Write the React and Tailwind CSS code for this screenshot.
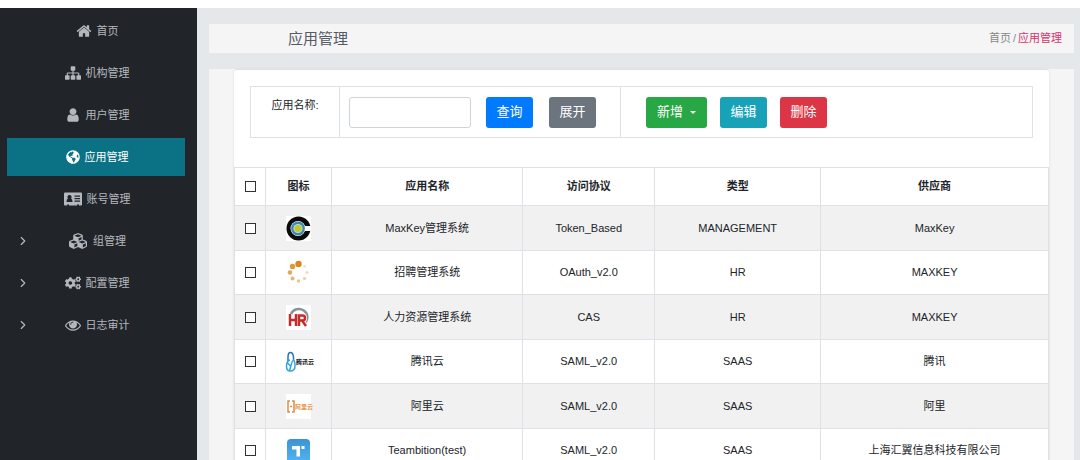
import { useState } from 'react';
import { FaCogs, FaCubes, FaGlobeAmericas } from 'react-icons/fa';
import { ChevronRight } from 'lucide-react';

function Glyph({ d, className }) {
  return (
    <svg viewBox="0 0 1792 1792" fill="currentColor" className={className} aria-hidden="true">
      <path d={d} />
    </svg>
  );
}

const HOME =
  'M1472 992v480q0 26-19 45t-45 19h-384v-384h-256v384h-384q-26 0-45-19t-19-45v-480q0-1 .5-3t.5-3l575-474 575 474q1 2 1 6zm223-69l-62 74q-8 9-21 11h-3q-13 0-21-7l-692-577-692 577q-12 8-24 7-13-2-21-11l-62-74q-8-10-7-23.5t11-21.5l719-599q32-26 76-26t76 26l244 204v-195q0-14 9-23t23-9h192q14 0 23 9t9 23v408l219 182q10 8 11 21.5t-7 23.5z';
const SITEMAP =
  'M1792 1248v320q0 40-28 68t-68 28h-320q-40 0-68-28t-28-68v-320q0-40 28-68t68-28h96v-192h-512v192h96q40 0 68 28t28 68v320q0 40-28 68t-68 28h-320q-40 0-68-28t-28-68v-320q0-40 28-68t68-28h96v-192h-512v192h96q40 0 68 28t28 68v320q0 40-28 68t-68 28h-320q-40 0-68-28t-28-68v-320q0-40 28-68t68-28h96v-192q0-52 38-90t90-38h512v-192h-96q-40 0-68-28t-28-68v-320q0-40 28-68t68-28h320q40 0 68 28t28 68v320q0 40-28 68t-68 28h-96v192h512q52 0 90 38t38 90v192h96q40 0 68 28t28 68z';
const USER =
  'M1536 1399q0 109-62.5 187t-150.5 78h-854q-88 0-150.5-78t-62.5-187q0-85 8.5-160.5t31.5-152 58.5-131 94-89 134.5-34.5q131 128 313 128t313-128q76 0 134.5 34.5t94 89 58.5 131 31.5 152 8.5 160.5zm-256-887q0 159-112.5 271.5t-271.5 112.5-271.5-112.5-112.5-271.5 112.5-271.5 271.5-112.5 271.5 112.5 112.5 271.5z';
const EYE =
  'M1664 960q-152-236-381-353 61 104 61 225 0 185-131.5 316.5t-316.5 131.5-316.5-131.5-131.5-316.5q0-121 61-225-229 117-381 353 133 205 333.5 326.5t434.5 121.5 434.5-121.5 333.5-326.5zm-720-384q0-20-14-34t-34-14q-125 0-214.5 89.5t-89.5 214.5q0 20 14 34t34 14 34-14 14-34q0-86 61-147t147-61q20 0 34-14t14-34zm848 384q0 34-20 69-140 230-376.5 368.5t-499.5 138.5-499.5-139-376.5-368q-20-35-20-69t20-69q140-229 376.5-368t499.5-139 499.5 139 376.5 368q20 35 20 69z';

function CardIcon() {
  return (
    <svg viewBox="0 0 18 14" className="h-[14px] w-[18px]" fill="currentColor" fillRule="evenodd" aria-hidden="true">
      <path d="M1 0.5H17a1 1 0 0 1 1 1V12.5a1 1 0 0 1-1 1H15V12.5H13V13.5H5V12.5H3V13.5H1a1 1 0 0 1-1-1V1.5a1 1 0 0 1 1-1ZM5.5 3A2 2.1 0 0 0 4 6.6Q2.5 7 2.5 10H8.5Q8.5 7 7 6.6A2 2.1 0 0 0 5.5 3ZM10.5 3.5V4.7H16V3.5ZM10.5 6V7.2H16V6ZM10.5 8.5V9.7H16V8.5Z" />
    </svg>
  );
}

function MaxKeyLogo() {
  return (
    <svg viewBox="0 0 25 25" className="size-[25px]" aria-hidden="true">
      <rect width="25" height="25" fill="#fff" />
      <circle cx="12.5" cy="12.5" r="12" fill="#0a0a0a" />
      <path d="M14 12.5L19 10H25V15H19Z" fill="#fff" />
      <circle cx="12" cy="12.5" r="7.5" fill="#fff" />
      <circle cx="12" cy="12.5" r="6.9" fill="#3d88ab" />
      <circle cx="12" cy="12.5" r="4.6" fill="#b9dce0" />
      <circle cx="12" cy="12.5" r="3.6" fill="#c3c62c" />
    </svg>
  );
}

function RecruitLogo() {
  return (
    <svg viewBox="0 0 25 25" className="size-[25px]" aria-hidden="true">
      <circle cx="12.5" cy="4" r="3.2" fill="#d68a1c" />
      <circle cx="6.5" cy="6.5" r="2.7" fill="#dc9a3a" />
      <circle cx="4" cy="12.5" r="2.3" fill="#e0a960" />
      <circle cx="6.5" cy="18.5" r="2" fill="#e2b67e" />
      <circle cx="12.5" cy="21" r="1.7" fill="#e6c297" />
      <circle cx="18.5" cy="18.5" r="1.6" fill="#eccfae" />
      <circle cx="21" cy="12.5" r="1.5" fill="#efd9c0" />
      <circle cx="18.5" cy="6.5" r="1.4" fill="#f2e2d0" />
    </svg>
  );
}

function HrLogo() {
  return (
    <svg viewBox="0 0 25 25" className="size-[25px]" aria-hidden="true">
      <rect width="25" height="25" fill="#fff" />
      <path d="M5 9A8.5 8 0 1 1 18.5 18" fill="none" stroke="#8b9494" strokeWidth="2.5" />
      <path d="M4 9V21M10 9V21M4 15H10M13 21V10.5H16.5Q19 10.5 19 13T16.5 15.5H13M16 15.5L20 21" fill="none" stroke="#fff" strokeWidth="4" />
      <path d="M4 9V21M10 9V21M4 15H10M13 21V10.5H16.5Q19 10.5 19 13T16.5 15.5H13M16 15.5L20 21" fill="none" stroke="#c62b2b" strokeWidth="2.5" />
    </svg>
  );
}

function TencentLogo() {
  return (
    <svg viewBox="0 0 25 25" className="size-[25px] overflow-visible" aria-hidden="true">
      <g fill="none" strokeWidth="1.5" strokeLinejoin="round">
        <path d="M2 12V8Q2 3.500 4.500 3.500T7.500 8V11" stroke="#2473b8" />
        <path d="M4 11Q0.500 12 0.500 17T4 22Q9 22 9 17T7.500 11Q6 12 5.500 15L3.500 21.500M1.500 14L4.500 17" stroke="#35a5dc" />
      </g>
      <text x="10" y="15" fontSize="6" fontWeight="700" fill="#111">腾讯云</text>
    </svg>
  );
}

function AliyunLogo() {
  return (
    <svg viewBox="0 0 25 25" className="size-[25px] overflow-visible" aria-hidden="true">
      <rect width="25" height="25" fill="#fff" />
      <path d="M4 7H2V18H4M6 7H8V18H6M4 12.500H6" fill="none" stroke="#e08a43" strokeWidth="1.500" />
      <text x="9" y="15" fontSize="6" fontWeight="700" fill="#e8954f">阿里云</text>
    </svg>
  );
}

function TeambitionLogo() {
  return (
    <svg viewBox="0 0 25 25" className="size-[25px]" aria-hidden="true">
      <defs>
        <linearGradient id="tb" x1="0" y1="0" x2="0" y2="1">
          <stop offset="0" stopColor="#3b93d6" />
          <stop offset="1" stopColor="#54b4f0" />
        </linearGradient>
      </defs>
      <rect x="1" y="1" width="23" height="24" rx="4" fill="url(#tb)" />
      <path d="M6 8H14V18.5H10.5V11.5H6ZM15.5 8H18.5V11H15.5Z" fill="#fff" />
    </svg>
  );
}

const menu = [
  { label: '首页', icon: <Glyph d={HOME} className="size-4" /> },
  { label: '机构管理', icon: <Glyph d={SITEMAP} className="size-4" /> },
  { label: '用户管理', icon: <Glyph d={USER} className="size-4" /> },
  { label: '应用管理', icon: <FaGlobeAmericas className="size-[14px]" />, active: true },
  { label: '账号管理', icon: <CardIcon /> },
  { label: '组管理', icon: <FaCubes className="h-[18px] w-[20px]" />, sub: true },
  { label: '配置管理', icon: <FaCogs className="size-4" />, sub: true },
  { label: '日志审计', icon: <Glyph d={EYE} className="size-4" />, sub: true },
];

const apps = [
  { name: 'MaxKey管理系统', protocol: 'Token_Based', type: 'MANAGEMENT', vendor: 'MaxKey', logo: <MaxKeyLogo /> },
  { name: '招聘管理系统', protocol: 'OAuth_v2.0', type: 'HR', vendor: 'MAXKEY', logo: <RecruitLogo /> },
  { name: '人力资源管理系统', protocol: 'CAS', type: 'HR', vendor: 'MAXKEY', logo: <HrLogo /> },
  { name: '腾讯云', protocol: 'SAML_v2.0', type: 'SAAS', vendor: '腾讯', logo: <TencentLogo /> },
  { name: '阿里云', protocol: 'SAML_v2.0', type: 'SAAS', vendor: '阿里', logo: <AliyunLogo /> },
  { name: 'Teambition(test)', protocol: 'SAML_v2.0', type: 'SAAS', vendor: '上海汇翼信息科技有限公司', logo: <TeambitionLogo /> },
];

const btn = 'flex h-[31px] items-center justify-center rounded-[3px] text-[13px] text-white';
const cell = 'border border-[#dee2e6] p-0';

function Check({ label, checked, onChange }) {
  return (
    <input
      type="checkbox"
      aria-label={label}
      checked={checked}
      onChange={onChange}
      className="mx-auto block size-[11px] appearance-none border border-[#333] bg-white checked:bg-[#007bff]"
    />
  );
}

export default function App() {
  const [name, setName] = useState('');
  const [selected, setSelected] = useState([]);

  function toggle(n) {
    setSelected(selected.includes(n) ? selected.filter((s) => s !== n) : [...selected, n]);
  }

  const all = selected.length === apps.length;

  return (
    <div className="flex h-screen flex-col bg-white pt-2 font-['Liberation_Sans','Noto_Sans_CJK_SC',sans-serif] text-[11px] text-[#212529]">
      <div className="flex min-h-0 flex-1 bg-[#e4e8ea]">
        <nav className="flex w-[197px] shrink-0 flex-col gap-1 bg-[#212529] pt-1 pr-3 pl-[7px]">
          {menu.map((m) => (
            <a
              key={m.label}
              href="#"
              className={
                m.active
                  ? 'flex h-[38px] items-center bg-[#0b7285] text-white'
                  : 'flex h-[38px] items-center text-[#b4b8be]'
              }
            >
              <span className="w-8 pl-[9px]">{m.sub && <ChevronRight size={14} strokeWidth={2} />}</span>
              <span className="flex flex-1 items-center justify-center gap-[5px] pr-[30px]">
                {m.icon}
                {m.label}
              </span>
            </a>
          ))}
        </nav>

        <main className="flex min-w-0 flex-1 flex-col gap-4 overflow-y-auto pt-4 pr-[6px] pl-3 [scrollbar-width:none]">
          <header className="flex h-[29px] shrink-0 items-center justify-between bg-[#f5f5f6] pr-3 pl-[79px]">
            <h1 className="text-[15px] leading-5 text-[#545b64]">应用管理</h1>
            <div className="flex gap-[2px] text-[#888]">
              <a href="#">首页</a>
              <span>/</span>
              <a href="#" className="text-[#d6336c]">应用管理</a>
            </div>
          </header>

          <section className="flex-1 bg-[#f5f5f6] px-[25px]">
            <div className="rounded-t-[3px] border-t border-[#dee2e6] bg-white pt-4 shadow-sm">
              <form className="mx-4 flex h-[52px] border border-[#dee2e6]" onSubmit={(e) => e.preventDefault()}>
                <label htmlFor="app-name" className="w-[89px] border-r border-[#dee2e6] pt-[10px] text-center leading-4">
                  应用名称:
                </label>
                <div className="flex w-[281px] items-center border-r border-[#dee2e6] pl-[9px]">
                  <input
                    id="app-name"
                    value={name}
                    onChange={(e) => setName(e.target.value)}
                    className="h-[31px] w-[122px] rounded-[3px] border border-[#ced4da] px-2 outline-none"
                  />
                  <button className={btn + ' ml-[15px] w-[47px] bg-[#007bff]'}>查询</button>
                  <button type="button" className={btn + ' ml-4 w-[47px] bg-[#6c757d]'}>展开</button>
                </div>
                <div className="flex items-center gap-[13px] pl-[25px]">
                  <button type="button" className={btn + ' w-[61px] gap-[7px] bg-[#28a745]'}>
                    新增
                    <svg viewBox="0 0 6 3" className="h-[3px] w-[6px]" fill="currentColor" aria-hidden="true">
                      <path d="M0 0H6L3 3Z" />
                    </svg>
                  </button>
                  <button type="button" className={btn + ' w-[47px] bg-[#17a2b8]'}>编辑</button>
                  <button type="button" className={btn + ' w-[47px] bg-[#dc3545]'}>删除</button>
                </div>
              </form>

              <table className="mt-[29px] w-full table-fixed border-collapse text-center">
                <colgroup>
                  <col className="w-[31px]" />
                  <col className="w-[66px]" />
                  <col className="w-[23.5%]" />
                  <col className="w-[16.2%]" />
                  <col className="w-[20.4%]" />
                  <col />
                </colgroup>
                <thead>
                  <tr className="h-[38px]">
                    <th className={cell}>
                      <Check label="全选" checked={all} onChange={() => setSelected(all ? [] : apps.map((a) => a.name))} />
                    </th>
                    <th className={cell}>图标</th>
                    <th className={cell}>应用名称</th>
                    <th className={cell}>访问协议</th>
                    <th className={cell}>类型</th>
                    <th className={cell}>供应商</th>
                  </tr>
                </thead>
                <tbody>
                  {apps.map((a) => (
                    <tr key={a.name} className="h-[44px] odd:h-[45px] odd:bg-[#f1f1f1]">
                      <td className={cell}>
                        <Check label={a.name} checked={selected.includes(a.name)} onChange={() => toggle(a.name)} />
                      </td>
                      <td className={cell}>
                        <div className="flex justify-center">{a.logo}</div>
                      </td>
                      <td className={cell}>{a.name}</td>
                      <td className={cell}>{a.protocol}</td>
                      <td className={cell}>{a.type}</td>
                      <td className={cell}>{a.vendor}</td>
                    </tr>
                  ))}
                </tbody>
              </table>
            </div>
          </section>
        </main>
      </div>
    </div>
  );
}
